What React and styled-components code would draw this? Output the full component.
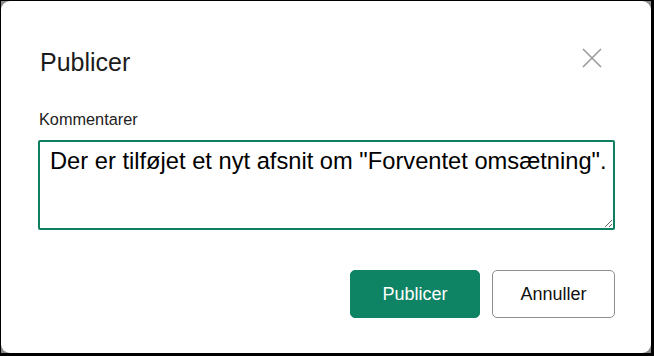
import React from "react";
import styled, { createGlobalStyle } from "styled-components";

const Global = createGlobalStyle`
  html, body { margin: 0; padding: 0; background: #000; }
  body { font-family: "Liberation Sans", Arial, sans-serif; }
  #root { width: 654px; height: 356px; }
`;

const Backdrop = styled.div`
  width: 650px;
  height: 352px;
  margin: 1px 0 0 1px;
  background: #8c8c8c;
`;

const Dialog = styled.div`
  box-sizing: border-box;
  width: 100%;
  height: 100%;
  background: #fff;
  border-radius: 9px;
  padding: 49px 36px 0 37px;
  display: flex;
  flex-direction: column;
`;

const Header = styled.div`
  display: flex;
  justify-content: space-between;
  align-items: flex-start;
`;

const Title = styled.h2`
  margin: 0;
  font-size: 25px;
  line-height: 25px;
  font-weight: 400;
  color: #1b1b1b;
  padding-left: 2px;
`;

const CloseButton = styled.button`
  border: 0;
  background: transparent;
  padding: 0;
  margin: -2px 13px 0 0;
  width: 20px;
  height: 20px;
  display: flex;
  cursor: pointer;
`;

const Label = styled.label`
  margin-top: 34px;
  font-size: 16.3px;
  line-height: 20px;
  color: #222;
  padding-left: 1px;
`;

const TextArea = styled.textarea`
  box-sizing: border-box;
  margin-top: 11px;
  width: 100%;
  height: 90px;
  border: 2px solid #0f7f62;
  border-radius: 2px;
  padding: 5px 2px 5px 10px;
  font-family: "Liberation Sans", Arial, sans-serif;
  font-size: 23.7px;
  line-height: 28.8px;
  color: #000;
  outline: none;
  overflow: hidden;
  resize: both;
`;

const Actions = styled.div`
  margin-top: 40px;
  display: flex;
  justify-content: flex-end;
  gap: 12px;
`;

const Button = styled.button`
  box-sizing: border-box;
  height: 48px;
  width: ${(p) => p.$w}px;
  border-radius: 5px;
  font-family: "Liberation Sans", Arial, sans-serif;
  font-size: 18px;
  cursor: pointer;
  background: ${(p) => (p.$primary ? "#0f8464" : "#fff")};
  color: ${(p) => (p.$primary ? "#fff" : "#111")};
  border: 1px solid ${(p) => (p.$primary ? "#0f8464" : "#8d8d8d")};
`;

export default function App() {
  return (
    <>
      <Global />
      <Backdrop>
        <Dialog>
          <Header>
            <Title>Publicer</Title>
            <CloseButton aria-label="Luk">
              <svg width="20" height="20" viewBox="0 0 20 20">
                <path d="M1 1 L19 19 M19 1 L1 19" stroke="#9a9a9a" strokeWidth="1.6" fill="none" />
              </svg>
            </CloseButton>
          </Header>
          <Label htmlFor="c">Kommentarer</Label>
          <TextArea id="c" defaultValue={'Der er tilføjet et nyt afsnit om "Forventet omsætning".'} />
          <Actions>
            <Button $primary $w={130}>Publicer</Button>
            <Button $w={123}>Annuller</Button>
          </Actions>
        </Dialog>
      </Backdrop>
    </>
  );
}
